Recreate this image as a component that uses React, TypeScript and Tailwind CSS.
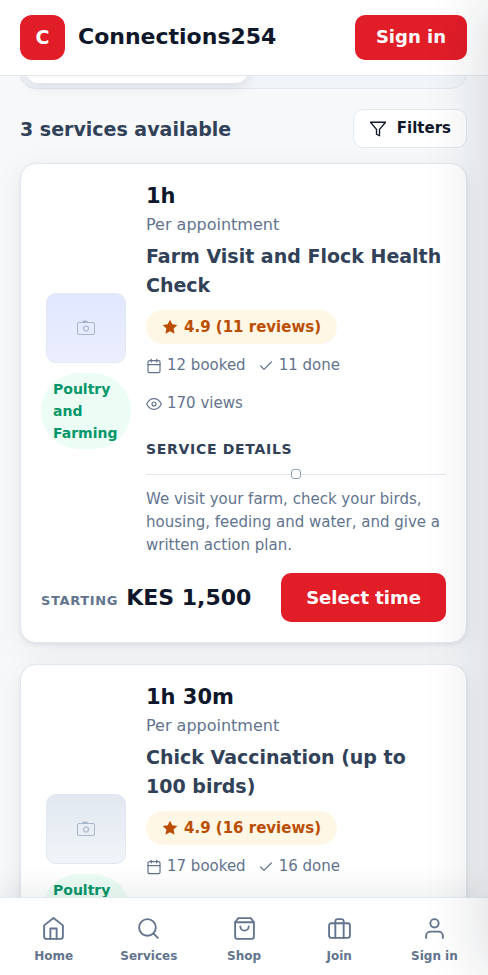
import { FiCalendar, FiCheck, FiEye, FiFilter, FiHome, FiSearch, FiShoppingBag, FiBriefcase, FiUser } from "react-icons/fi";
import type { IconType } from "react-icons";

interface Service {
  id: number;
  duration: string;
  title: string;
  category: string;
  rating: string;
  reviews: number;
  booked: number;
  done: number;
  views: number;
  details: string;
  price: string;
  thumb: string;
}

const services: Service[] = [
  {
    id: 1,
    duration: "1h",
    title: "Farm Visit and Flock Health Check",
    category: "Poultry and Farming",
    rating: "4.9",
    reviews: 11,
    booked: 12,
    done: 11,
    views: 170,
    details:
      "We visit your farm, check your birds, housing, feeding and water, and give a written action plan.",
    price: "KES 1,500",
    thumb: "from-indigo-100 to-[#eceffe]",
  },
  {
    id: 2,
    duration: "1h 30m",
    title: "Chick Vaccination (up to 100 birds)",
    category: "Poultry and Farming",
    rating: "4.9",
    reviews: 16,
    booked: 17,
    done: 16,
    views: 204,
    details: "Vaccination for your chicks at your farm, with a schedule for the next doses.",
    price: "KES 2,000",
    thumb: "from-slate-200 to-slate-100",
  },
];

const navItems: { label: string; icon: IconType }[] = [
  { label: "Home", icon: FiHome },
  { label: "Services", icon: FiSearch },
  { label: "Shop", icon: FiShoppingBag },
  { label: "Join", icon: FiBriefcase },
  { label: "Sign in", icon: FiUser },
];

function CameraIcon() {
  return (
    <svg width="18" height="16" viewBox="0 0 18 16" fill="none" stroke="currentColor" aria-hidden="true">
      <rect x="0.5" y="2.5" width="17" height="12" rx="1.5" />
      <circle cx="9" cy="8.5" r="2.5" strokeWidth="1.2" />
      <path d="M5.500 1.500h5" strokeWidth="1.800" />
    </svg>
  );
}

function StarIcon() {
  return (
    <svg width="16" height="16" viewBox="0 0 24 24" fill="currentColor" aria-hidden="true">
      <path d="M12 1l3.4 7 7.6 1-5.6 5.3 1.4 7.7-6.8-3.7L5.200 22l1.400-7.700L1 9l7.600-1z" />
    </svg>
  );
}

function ServiceCard({ service }: { service: Service }) {
  return (
    <article className="rounded-2xl border border-slate-200 bg-white p-5 shadow-[0_2px_4px_rgba(15,23,42,0.07),0_8px_32px_rgba(15,23,42,0.06)]">
      <div className="flex items-center gap-[15px]">
        <div className="flex w-[90px] shrink-0 flex-col items-center gap-2.5">
          <div
            className={`flex h-[70px] w-20 items-center justify-center rounded-[10px] border border-slate-200 bg-gradient-to-b text-slate-400/70 ${service.thumb}`}
          >
            <CameraIcon />
          </div>
          <span className="w-full rounded-full bg-[#ecfdf5] px-3 py-[5px] text-sm leading-[22px] font-bold text-[#059669]">
            {service.category}
          </span>
        </div>

        <div className="min-w-0 flex-1">
          <p className="text-[21px] leading-6 font-bold text-slate-900">{service.duration}</p>
          <p className="mt-[5px] text-base leading-6 text-slate-500">Per appointment</p>
          <h3 className="mt-[5px] text-[19px] leading-[29px] font-bold text-slate-700">{service.title}</h3>
          <span className="mt-2.5 inline-flex h-[34px] items-center gap-1.5 rounded-full bg-[#fff7e6] px-4 align-top text-[15px] font-bold text-amber-700">
            <StarIcon />
            {service.rating} ({service.reviews} reviews)
          </span>
          <div className="mt-2.5 flex flex-wrap gap-x-3 gap-y-[15px] text-[15px] leading-[23px] text-slate-500">
            <span className="flex items-center gap-[5px]">
              <FiCalendar size={16} strokeWidth={1.8} />
              {service.booked} booked
            </span>
            <span className="flex items-center gap-[5px]">
              <FiCheck size={16} strokeWidth={1.8} />
              {service.done} done
            </span>
            <span className="flex items-center gap-[5px]">
              <FiEye size={16} strokeWidth={1.8} />
              {service.views} views
            </span>
          </div>
          <h4 className="mt-[22px] text-sm leading-6 font-bold tracking-wider text-slate-700">SERVICE DETAILS</h4>
          <div className="mt-2 flex items-center">
            <span className="h-px flex-1 bg-slate-200" />
            <span className="size-2.5 rounded-[3px] border border-slate-400 bg-white" />
            <span className="h-px flex-1 bg-slate-200" />
          </div>
          <p className="mt-[9px] text-[15px] leading-[23px] text-slate-500">{service.details}</p>
        </div>
      </div>

      <div className="mt-4 flex items-center justify-between">
        <p className="flex items-baseline gap-2">
          <span className="text-[13px] font-bold tracking-wider text-slate-500">STARTING</span>
          <span className="text-[22px] leading-7 font-bold text-slate-900">{service.price}</span>
        </p>
        <button type="button" className="h-[49px] rounded-[10px] bg-[#e11d28] px-[25px] text-lg font-bold text-white">
          Select time
        </button>
      </div>
    </article>
  );
}

export default function App() {
  return (
    <div className="flex h-screen flex-col overflow-hidden bg-[#f6f8fa] font-['DejaVu_Sans',sans-serif]">
      <header className="z-10 flex h-[76px] shrink-0 items-center justify-between border-b border-slate-200 bg-white pr-[21px] pb-px pl-5">
        <a href="#home" className="flex items-center gap-[13px]">
          <span className="flex size-[45px] items-center justify-center rounded-xl bg-[#e11d28] text-[19px] font-bold text-white">
            C
          </span>
          <span className="text-[22px] leading-7 font-bold text-slate-900">Connections254</span>
        </a>
        <button type="button" className="h-[45px] rounded-[10px] bg-[#e11d28] px-[21px] text-lg font-bold text-white">
          Sign in
        </button>
      </header>

      <main className="min-h-0 flex-1 overflow-y-auto pr-[21px] pb-6 pl-5 [scrollbar-width:none]">
        {/* the view switch is scrolled most of the way under the header */}
        <div className="-mt-10 flex h-[53px] rounded-2xl border border-slate-200 bg-slate-100 p-[5px]">
          <span className="w-[51%] rounded-xl bg-white shadow-[0_4px_12px_rgba(15,23,42,0.1)]" />
        </div>

        <div className="mt-5 flex items-center justify-between">
          <h2 className="text-[19px] leading-7 font-bold text-slate-700">3 services available</h2>
          <button
            type="button"
            className="flex h-[39px] items-center gap-2.5 rounded-[10px] border border-slate-200 bg-white px-[15px] text-[15px] font-bold text-slate-900"
          >
            <FiFilter size={18} strokeWidth={1.8} />
            Filters
          </button>
        </div>

        <div className="mt-[15px] flex flex-col gap-[21px]">
          {services.map((service) => (
            <ServiceCard key={service.id} service={service} />
          ))}
        </div>
      </main>

      <nav className="z-10 flex h-[78px] shrink-0 border-t border-slate-200 bg-white px-1.5 pt-1.5 shadow-[0_-8px_30px_rgba(15,23,42,0.08)]">
        {navItems.map(({ label, icon: Icon }) => (
          <a
            key={label}
            href={`#${label.toLowerCase().replace(" ", "-")}`}
            className="flex flex-1 flex-col items-center justify-center gap-[7px] text-xs leading-4 font-bold text-slate-500"
          >
            <Icon size={25} strokeWidth={1.8} />
            {label}
          </a>
        ))}
      </nav>

      {/* closed filter drawer, parked off the right edge */}
      <aside className="pointer-events-none fixed inset-y-0 left-full z-20 w-80 bg-white shadow-[-12px_0_50px_rgba(15,23,42,0.12)]" />
    </div>
  );
}
